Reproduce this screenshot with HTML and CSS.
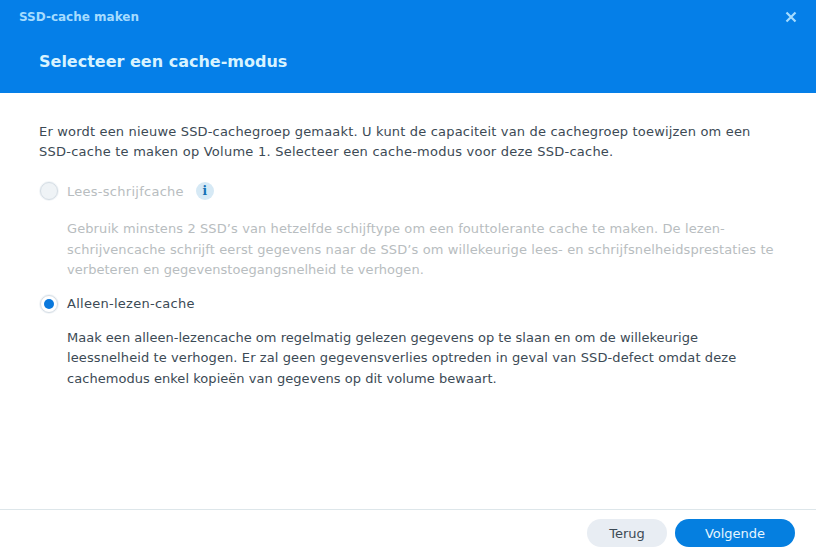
FILE: index.html
```html
<!DOCTYPE html>
<html lang="nl">
<head>
<meta charset="utf-8">
<title>SSD-cache maken</title>
<link rel="stylesheet" href="styles.css">
</head>
<body>
<div class="dialog">
  <header class="header">
    <div class="titlebar">
      <span class="window-title">SSD-cache maken</span>
      <svg class="close" width="12" height="12" viewBox="0 0 12 12" aria-label="Sluiten"><path d="M1.5 1.5l9 9M10.5 1.5l-9 9" fill="none" stroke="#a5dcff" stroke-width="2.2"/></svg>
    </div>
    <h1 class="step-title">Selecteer een cache-modus</h1>
  </header>
  <main class="content">
    <p class="intro">
      <span class="line ls-18">Er wordt een nieuwe SSD-cachegroep gemaakt. U kunt de capaciteit van de cachegroep toewijzen om een</span>
      <span class="line ls-24">SSD-cache te maken op Volume 1. Selecteer een cache-modus voor deze SSD-cache.</span>
    </p>
    <div class="option disabled">
      <div class="option-label">
        <span class="radio"></span>
        <span class="label-text">Lees-schrijfcache</span>
        <span class="info">i</span>
      </div>
      <p class="option-desc">
        <span class="line ls-10">Gebruik minstens 2 SSD’s van hetzelfde schijftype om een fouttolerante cache te maken. De lezen-</span>
        <span class="line ls-11">schrijvencache schrijft eerst gegevens naar de SSD’s om willekeurige lees- en schrijfsnelheidsprestaties te</span>
        <span class="line ls-04">verbeteren en gegevenstoegangsnelheid te verhogen.</span>
      </p>
    </div>
    <div class="option selected">
      <div class="option-label">
        <span class="radio checked"></span>
        <span class="label-text">Alleen-lezen-cache</span>
      </div>
      <p class="option-desc">
        <span class="line ls-01">Maak een alleen-lezencache om regelmatig gelezen gegevens op te slaan en om de willekeurige</span>
        <span class="line ls-10">leessnelheid te verhogen. Er zal geen gegevensverlies optreden in geval van SSD-defect omdat deze</span>
        <span class="line ls-04">cachemodus enkel kopieën van gegevens op dit volume bewaart.</span>
      </p>
    </div>
  </main>
  <footer class="footer">
    <button class="btn btn-secondary">Terug</button>
    <button class="btn btn-primary">Volgende</button>
  </footer>
</div>
</body>
</html>
```
FILE: styles.css
```css
* { box-sizing: border-box; }
html, body { margin: 0; height: 100%; }
body { font-family: "DejaVu Sans", Verdana, sans-serif; font-size: 13px; color: #3c4a55; background: #fff; }
.dialog { display: flex; flex-direction: column; height: 554px; }
.header { height: 93px; background: #057fe8; flex: none; display: flex; flex-direction: column; }
.titlebar { display: flex; justify-content: space-between; align-items: center; height: 34px; padding: 0 19px; }
.window-title { font-size: 12px; font-weight: bold; color: #a5dcff; }
.step-title { margin: 18px 0 0 39px; font-size: 16px; line-height: 20px; font-weight: bold; color: #d8f3ff; }
.close { display: block; }
.content { flex: 1; padding: 29px 39px 0; }
.intro { margin: 0; line-height: 20px; }
.line { display: block; white-space: nowrap; }
.ls-24 { letter-spacing: .24px; }
.ls-18 { letter-spacing: .18px; }
.ls-11 { letter-spacing: .11px; }
.ls-10 { letter-spacing: .1px; }
.ls-04 { letter-spacing: .04px; }
.ls-01 { letter-spacing: .01px; }
.option-label { display: flex; align-items: center; height: 22px; margin-left: 1px; }
.disabled { margin-top: 18px; color: #b8bdc0; }
.selected { margin-top: 12px; }
.radio { flex: none; width: 18px; height: 18px; border-radius: 50%; border: 1px solid #d5dde4; background: #fff; display: flex; align-items: center; justify-content: center; box-shadow: 0 0 0 1px #f2f5f8; }
.radio.checked::after { content: ""; width: 10px; height: 10px; border-radius: 50%; background: #0a78dc; }
.disabled .radio { background: #eff3f6; }
.label-text { margin-left: 9px; letter-spacing: .27px; }
.info { width: 18px; height: 18px; margin-left: 12px; border-radius: 50%; background: #d6e9f5; color: #1470b5; font-family: "DejaVu Serif", serif; font-size: 12px; font-weight: bold; display: flex; align-items: center; justify-content: center; }
.option-desc { margin: 0 0 0 28px; line-height: 20.5px; }
.disabled .option-desc { margin-top: 17px; }
.selected .option-desc { margin-top: 13px; }
.footer { flex: none; height: 45px; border-top: 1px solid #dde6ea; display: flex; justify-content: flex-end; gap: 8px; padding: 9px 21px 0 0; }
.btn { height: 28px; border: 0; border-radius: 14px; font: 13px "DejaVu Sans", Verdana, sans-serif; }
.btn-secondary { width: 80px; background: #e8edf3; color: #3c4a55; }
.btn-primary { width: 120px; background: #057fe0; color: #e6f6ff; }
```
